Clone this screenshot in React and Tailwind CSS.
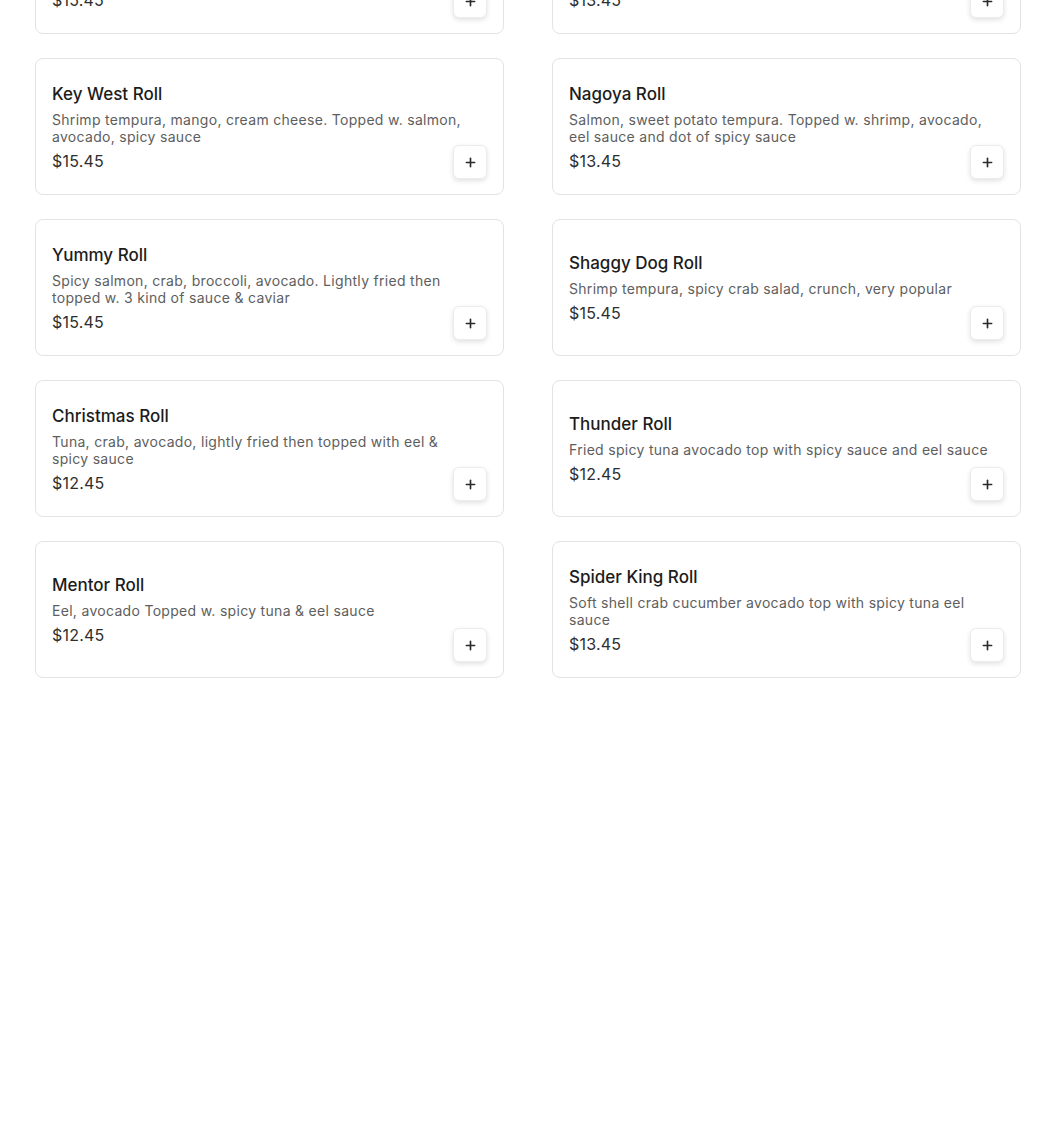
const items = [
  { name: "Dragon Roll", desc: "Shrimp tempura, cucumber. Topped w. eel, avocado, eel sauce and sesame seeds", price: "$15.45" },
  { name: "Rainbow Roll", desc: "Crab, cucumber, avocado. Topped w. tuna, salmon, yellowtail, white fish and shrimp", price: "$13.45" },
  { name: "Key West Roll", desc: "Shrimp tempura, mango, cream cheese. Topped w. salmon, avocado, spicy sauce", price: "$15.45" },
  { name: "Nagoya Roll", desc: "Salmon, sweet potato tempura. Topped w. shrimp, avocado, eel sauce and dot of spicy sauce", price: "$13.45" },
  { name: "Yummy Roll", desc: "Spicy salmon, crab, broccoli, avocado. Lightly fried then topped w. 3 kind of sauce & caviar", price: "$15.45" },
  { name: "Shaggy Dog Roll", desc: "Shrimp tempura, spicy crab salad, crunch, very popular", price: "$15.45" },
  { name: "Christmas Roll", desc: "Tuna, crab, avocado, lightly fried then topped with eel & spicy sauce", price: "$12.45" },
  { name: "Thunder Roll", desc: "Fried spicy tuna avocado top with spicy sauce and eel sauce", price: "$12.45" },
  { name: "Mentor Roll", desc: "Eel, avocado Topped w. spicy tuna & eel sauce", price: "$12.45" },
  { name: "Spider King Roll", desc: "Soft shell crab cucumber avocado top with spicy tuna eel sauce", price: "$13.45" },
];

function PlusIcon() {
  return (
    <svg viewBox="0 0 12 12" className="h-[11px] w-[11px]" fill="none" stroke="currentColor" strokeWidth="1.8" strokeLinecap="round">
      <line x1="6" y1="1.5" x2="6" y2="10.5" />
      <line x1="1.5" y1="6" x2="10.5" y2="6" />
    </svg>
  );
}

function MenuCard({ item }) {
  return (
    <div className="relative flex h-[137px] items-center rounded-lg border border-[#e3e3e3] bg-white px-4">
      <div className="flex w-full flex-col pt-[1px] pr-4">
        <h3 className="text-[17px] font-medium leading-6 text-[#1c1c1c]">{item.name}</h3>
        <p className="mt-[5px] text-[14px] leading-[17px] tracking-[0.3px] text-[#5e5e5e]">{item.desc}</p>
        <span className="mt-[4px] text-[16px] leading-6 tracking-[0.2px] text-[#2e2e2e]">{item.price}</span>
      </div>
      <button
        type="button"
        className="absolute bottom-[15px] right-[16px] flex h-[34px] w-[34px] items-center justify-center rounded-md border border-[#ececec] bg-white text-[#2b2b2b] shadow-[0_2px_5px_rgba(0,0,0,0.12)]"
        aria-label={`Add ${item.name}`}
      >
        <PlusIcon />
      </button>
    </div>
  );
}

export default function App() {
  return (
    <div className="min-h-[1133px] bg-white font-['Inter',sans-serif]">
      <div className="-mt-[103px] grid grid-cols-2 gap-x-[48px] gap-y-[24px] pl-[35px] pr-[29px]">
        {items.map((item) => (
          <MenuCard key={item.name} item={item} />
        ))}
      </div>
    </div>
  );
}
